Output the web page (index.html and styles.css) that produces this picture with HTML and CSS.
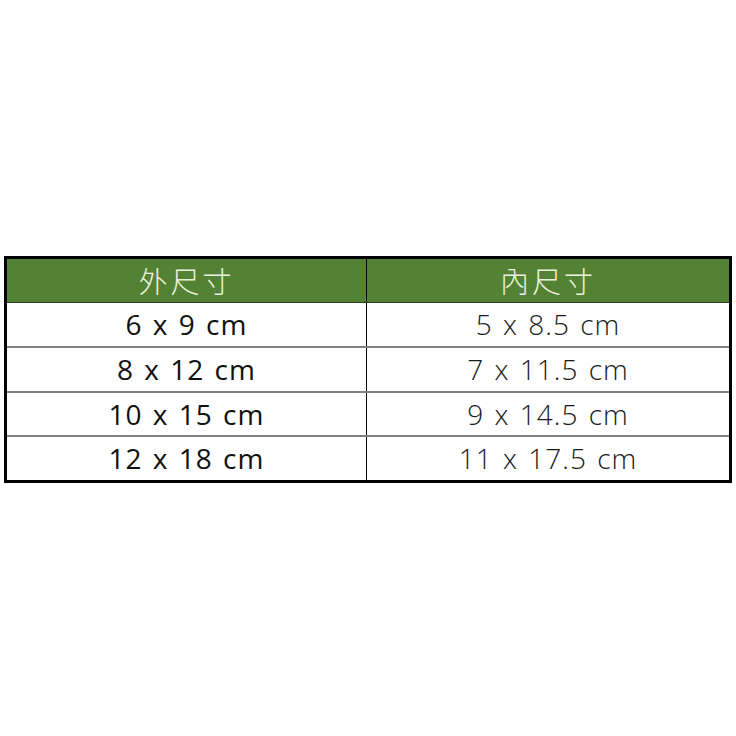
FILE: index.html
```html
<!DOCTYPE html>
<html lang="zh-Hant">
<head>
<meta charset="utf-8">
<title>尺寸表</title>
<link rel="stylesheet" href="styles.css">
</head>
<body>
<main class="page">
  <div class="size-table">
    <div class="row head">
      <div class="cell outer">外尺寸</div>
      <div class="cell">內尺寸</div>
    </div>
    <div class="row">
      <div class="cell outer">6 x 9 cm</div>
      <div class="cell inner">5 x 8.5 cm</div>
    </div>
    <div class="row">
      <div class="cell outer">8 x 12 cm</div>
      <div class="cell inner">7 x 11.5 cm</div>
    </div>
    <div class="row short">
      <div class="cell outer">10 x 15 cm</div>
      <div class="cell inner">9 x 14.5 cm</div>
    </div>
    <div class="row last">
      <div class="cell outer">12 x 18 cm</div>
      <div class="cell inner">11 x 17.5 cm</div>
    </div>
  </div>
</main>
</body>
</html>
```
FILE: styles.css
```css
html, body {
  margin: 0;
  padding: 0;
  background: #ffffff;
}

.page {
  width: 736px;
  height: 736px;
  box-sizing: border-box;
  padding: 256px 4px 0 4px;
}

.size-table {
  width: 728px;
  box-sizing: border-box;
  border: 3px solid #000000;
  font-family: "Open Sans", "Noto Sans CJK TC", sans-serif;
}

.row {
  display: grid;
  grid-template-columns: 360px 1fr;
  height: 45px;
  box-sizing: border-box;
  border-bottom: 2px solid #808080;
}

.row.short {
  height: 44px;
}

.row.last {
  height: 43px;
  border-bottom: none;
}

.cell {
  display: flex;
  align-items: center;
  justify-content: center;
  box-sizing: border-box;
  padding-bottom: 1px;
  color: #111111;
  font-size: 28px;
  line-height: 1;
  letter-spacing: 1px;
  word-spacing: 2px;
  white-space: nowrap;
}

.cell.outer {
  border-right: 1px solid #000000;
}

.cell.inner {
  color: #1a1a1a;
  font-weight: 300;
}

.row.head {
  height: 44px;
  background: #548235;
  border-bottom: 1px solid #2f3f22;
}

.row.head .cell {
  padding-bottom: 0;
  color: #eaf2dc;
  font-family: "Noto Sans CJK TC", sans-serif;
  font-weight: 300;
  font-size: 29px;
  letter-spacing: 3px;
}
```
